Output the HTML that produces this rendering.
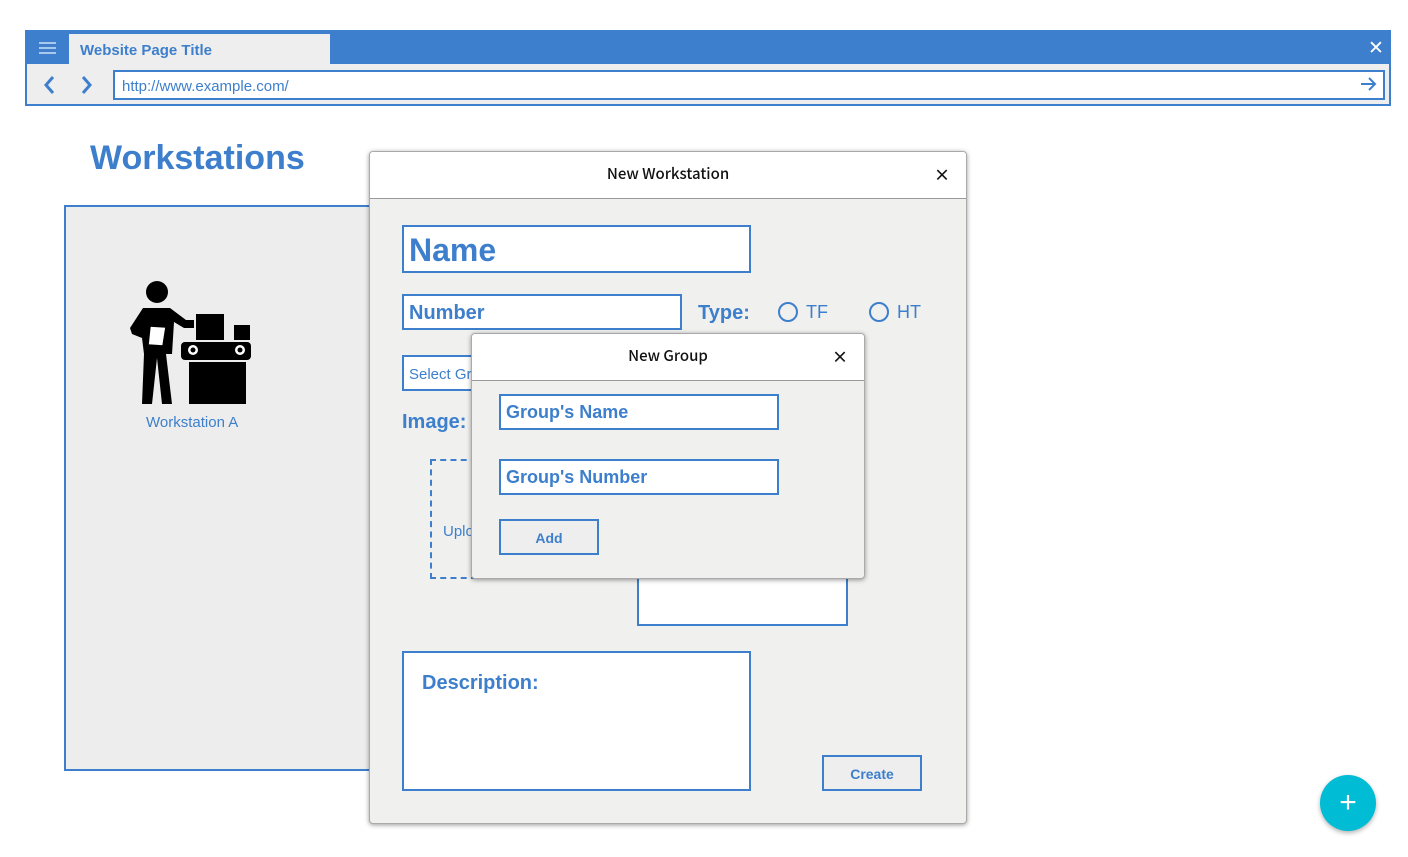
<!DOCTYPE html>
<html><head><style>
body{margin:0;width:1408px;height:857px;background:#fff;font-family:"Liberation Sans",sans-serif;position:relative;overflow:hidden}
.a{position:absolute;box-sizing:border-box}
.blue{color:#3d7fcc}
.inp{position:absolute;box-sizing:border-box;background:#fff;border:2px solid #3d7fcc;color:#3d7fcc;font-weight:bold;padding-left:5px}
.dlg{position:absolute;box-sizing:border-box;background:#f0f0ef;border:1px solid #aaa;border-radius:4px;box-shadow:0 1px 5px rgba(0,0,0,.4);overflow:hidden}
.hd{background:#fff;border-bottom:1px solid #999;text-align:center;font-family:"Noto Sans CJK SC","DejaVu Sans",sans-serif;font-weight:500;font-size:15px;color:#111;position:relative}
.x{position:absolute;right:16px;font-size:16px;font-weight:bold}
.btn{position:absolute;box-sizing:border-box;border:2px solid #3d7fcc;background:#eee;color:#3d7fcc;font-weight:bold;font-size:14px;text-align:center}
</style></head><body>
<div class="a" style="left:25px;top:30px;width:1366px;height:76px;background:#3d7fcc"></div>
<div class="a" style="left:27px;top:64px;width:1362px;height:40px;background:#eee"></div>
<div class="a" style="left:69px;top:34px;width:261px;height:30px;background:#eee;font-size:15px;font-weight:bold;color:#3d7fcc;padding:8px 11px">Website Page Title</div>
<div class="a" style="left:39px;top:42px;width:17px;height:2px;background:#a9c8ee;box-shadow:0 5px 0 #a9c8ee,0 10px 0 #a9c8ee"></div>
<div class="a" style="left:1368px;top:37px;color:#fff;font-size:19px">✕</div>
<svg class="a" style="left:40px;top:74px" width="60" height="22"><path d="M13 3 L6 11 L13 19 M43 3 L50 11 L43 19" stroke="#3d7fcc" stroke-width="3" fill="none"/></svg>
<div class="a" style="left:113px;top:70px;width:1272px;height:30px;background:#fff;border:2px solid #3d7fcc;color:#3d7fcc;font-size:15px;padding:6px 7px">http://www.example.com/</div>
<svg class="a" style="left:1359px;top:75px" width="20" height="18"><path d="M2 9 H16 M10 3 L16 9 L10 15" stroke="#3d7fcc" stroke-width="2" fill="none"/></svg>
<div class="a blue" style="left:90px;top:139px;font-size:34px;font-weight:bold">Workstations</div>
<div class="a" style="left:64px;top:205px;width:320px;height:566px;background:#ededed;border:2px solid #3d7fcc"></div>
<svg class="a" style="left:128px;top:280px" width="125" height="126">
<circle cx="29" cy="12" r="11"/>
<path d="M15 28 H42 L58 40 L66 40 L66 48 L56 48 L46 42 L44 74 L38 74 L44 124 L34 124 L29 78 L24 124 L14 124 L16 74 L14 58 L4 54 L2 48 Z"/>
<path d="M22 46 L38 47 L35 66 L20 65 Z" fill="#fff" stroke="#000" stroke-width="1.5"/>
<rect x="68" y="34" width="28" height="26"/><rect x="106" y="45" width="16" height="15"/>
<rect x="53" y="62" width="70" height="18" rx="4"/><circle cx="65" cy="70" r="5" fill="#fff"/><circle cx="65" cy="70" r="2.5"/><circle cx="112" cy="70" r="5" fill="#fff"/><circle cx="112" cy="70" r="2.5"/>
<rect x="61" y="82" width="57" height="42"/></svg>
<div class="a blue" style="left:146px;top:414px;font-size:15px">Workstation A</div>
<div class="dlg" style="left:369px;top:151px;width:598px;height:673px">
<div class="hd" style="height:46px;line-height:44px">New Workstation<span class="x">×</span></div>
</div>
<div class="inp" style="left:402px;top:225px;width:349px;height:48px;font-size:32px;line-height:46px">Name</div>
<div class="inp" style="left:402px;top:294px;width:280px;height:36px;font-size:20px;line-height:35px">Number</div>
<div class="a blue" style="left:698px;top:302px;font-size:20px;font-weight:bold">Type:</div>
<div class="a" style="left:778px;top:302px;width:20px;height:20px;border:2px solid #3d7fcc;border-radius:50%"></div>
<div class="a blue" style="left:806px;top:302px;font-size:18px">TF</div>
<div class="a" style="left:869px;top:302px;width:20px;height:20px;border:2px solid #3d7fcc;border-radius:50%"></div>
<div class="a blue" style="left:897px;top:302px;font-size:18px">HT</div>
<div class="inp" style="left:402px;top:355px;width:200px;height:36px;font-size:15px;font-weight:normal;line-height:35px">Select Group</div>
<div class="a blue" style="left:402px;top:411px;font-size:20px;font-weight:bold">Image:</div>
<div class="a" style="left:430px;top:459px;width:180px;height:120px;border:2px dashed #3d7fcc"></div>
<div class="a blue" style="left:443px;top:523px;font-size:15px">Upload</div>
<div class="a" style="left:637px;top:460px;width:211px;height:166px;background:#fff;border:2px solid #3d7fcc"></div>
<div class="a" style="left:402px;top:651px;width:349px;height:140px;background:#fff;border:2px solid #3d7fcc;color:#3d7fcc;font-weight:bold;font-size:20px;padding:19px 18px">Description:</div>
<div class="btn" style="left:822px;top:755px;width:100px;height:36px;line-height:34px">Create</div>
<div class="dlg" style="left:471px;top:333px;width:394px;height:246px">
<div class="hd" style="height:46px;line-height:44px">New Group<span class="x">×</span></div>
</div>
<div class="inp" style="left:499px;top:394px;width:280px;height:36px;font-size:18px;line-height:33px">Group's Name</div>
<div class="inp" style="left:499px;top:459px;width:280px;height:36px;font-size:18px;line-height:33px">Group's Number</div>
<div class="btn" style="left:499px;top:519px;width:100px;height:36px;line-height:34px">Add</div>
<div class="a" style="left:1320px;top:775px;width:56px;height:56px;border-radius:50%;background:#00bcd4;box-shadow:0 2px 5px rgba(0,0,0,.3);color:#fff;font-size:30px;text-align:center;line-height:56px">+</div>
</body></html>
